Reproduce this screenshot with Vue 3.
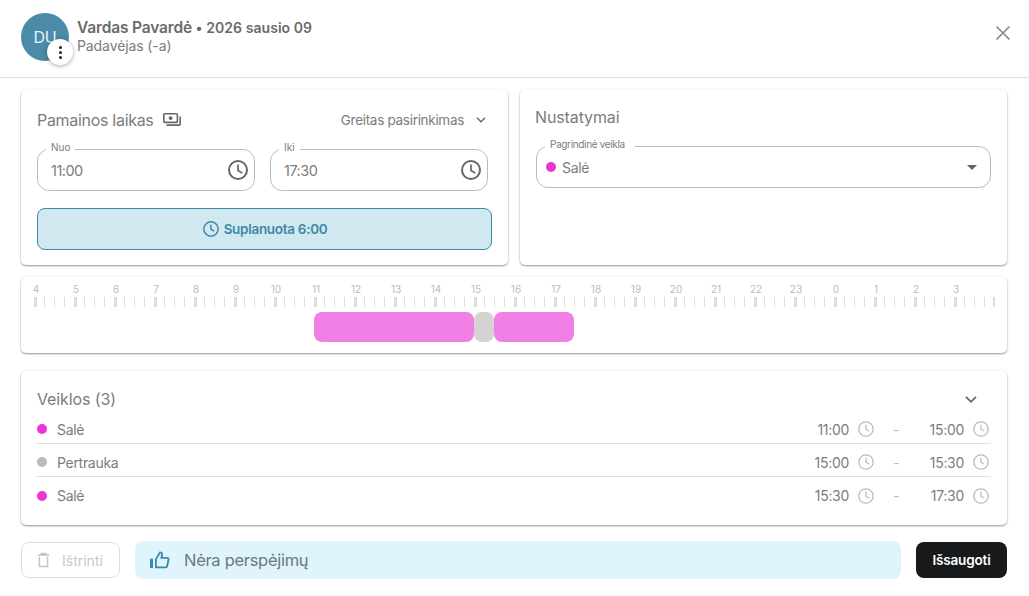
<script setup>
const hours = [4,5,6,7,8,9,10,11,12,13,14,15,16,17,18,19,20,21,22,23,0,1,2,3]
const ticks = Array.from({ length: 97 }, (_, i) => i)
const rows = [
  { name: 'Salė', color: '#ee33d9', from: '11:00', to: '15:00' },
  { name: 'Pertrauka', color: '#bbbbbb', from: '15:00', to: '15:30' },
  { name: 'Salė', color: '#ee33d9', from: '15:30', to: '17:30' },
]
</script>

<template>
  <div class="page">
    <header class="head">
      <div class="avatar">
        DU
        <button class="kebab"><i></i><i></i><i></i></button>
      </div>
      <div class="who">
        <div class="line1"><b>Vardas Pavardė</b> <span>• 2026 sausio 09</span></div>
        <div class="line2">Padavėjas (-a)</div>
      </div>
      <svg class="close" width="16" height="16" viewBox="0 0 16 16"><path d="M1.5 1.5 14.5 14.5M14.5 1.5 1.5 14.5" stroke="#8a8a8a" stroke-width="1.7" fill="none"/></svg>
    </header>

    <main class="body">
      <div class="top">
        <section class="card left">
          <div class="title-row">
            <h2>Pamainos laikas</h2>
            <svg class="money" width="20" height="18" viewBox="0 0 20 18" fill="none" stroke="#666" stroke-width="1.6">
              <rect x="1.8" y="2.8" width="13.6" height="8.6" rx="1" />
              <circle cx="8.6" cy="7.1" r="1.9" fill="#666" stroke="none" />
              <path d="M18.2 5.5v7.6a1 1 0 0 1-1 1H4.5" />
            </svg>
            <span class="quick">Greitas pasirinkimas</span>
            <svg class="quick-chev" width="12" height="8" viewBox="0 0 12 8" fill="none" stroke="#666" stroke-width="1.5"><path d="M2 1.8 6 5.8 10 1.8" /></svg>
          </div>
          <div class="times">
            <div class="field">
              <label>Nuo</label>
              <span class="value">11:00</span>
              <svg class="clock" width="22" height="22" viewBox="0 0 22 22" fill="none" stroke="#666" stroke-width="2"><circle cx="11" cy="11" r="9"/><path d="M11 5.5V11.5L15.2 14" stroke-width="1.7"/></svg>
            </div>
            <div class="field">
              <label>Iki</label>
              <span class="value">17:30</span>
              <svg class="clock" width="22" height="22" viewBox="0 0 22 22" fill="none" stroke="#666" stroke-width="2"><circle cx="11" cy="11" r="9"/><path d="M11 5.5V11.5L15.2 14" stroke-width="1.7"/></svg>
            </div>
          </div>
          <div class="planned">
            <svg width="18" height="18" viewBox="0 0 18 18" fill="none" stroke="#3f88a6" stroke-width="1.5"><circle cx="9" cy="9" r="7.2"/><path d="M9 4.8V9.4L12.2 11.2"/></svg>
            <span>Suplanuota 6:00</span>
          </div>
        </section>

        <section class="card right">
          <h2>Nustatymai</h2>
          <div class="field select">
            <label>Pagrindinė veikla</label>
            <i class="dot pink"></i>
            <span class="sale">Salė</span>
            <span class="caret"></span>
          </div>
        </section>
      </div>

      <section class="card timeline">
        <div class="labels"><span v-for="h in hours" :key="h">{{ h }}</span></div>
        <div class="ticks">
          <span v-for="t in ticks" :key="t" class="cell">
            <i :class="{ major: t % 4 === 0 && t < 96, last: t === 96 }"></i>
          </span>
        </div>
        <div class="bars">
          <span class="bar work w160"></span>
          <span class="bar brk"></span>
          <span class="bar work w80"></span>
        </div>
      </section>

      <section class="card acts">
        <div class="acts-head">
          <h2>Veiklos (3)</h2>
          <svg width="14" height="9" viewBox="0 0 14 9" fill="none" stroke="#666" stroke-width="1.7"><path d="M2 1.8 7 6.8 12 1.8"/></svg>
        </div>
        <div v-for="(r, i) in rows" :key="i" class="row">
          <i class="dot" :style="{ background: r.color }"></i>
          <span class="name">{{ r.name }}</span>
          <span class="t t1">{{ r.from }}</span>
          <svg class="c" width="16" height="16" viewBox="0 0 16 16" fill="none" stroke="#bbb" stroke-width="1.3"><circle cx="8" cy="8" r="7.2"/><path d="M8 3.8V8.2L11 10"/></svg>
          <span class="dash">-</span>
          <span class="t t2">{{ r.to }}</span>
          <svg class="c" width="16" height="16" viewBox="0 0 16 16" fill="none" stroke="#bbb" stroke-width="1.3"><circle cx="8" cy="8" r="7.2"/><path d="M8 3.8V8.2L11 10"/></svg>
        </div>
      </section>

      <footer class="foot">
        <button class="del">
          <svg width="13" height="16" viewBox="0 0 14 16" fill="none" stroke="#c4c4c4" stroke-width="1.6"><path d="M1 2.6h12M4.5 2.4V1h5v1.4M2.6 4.6V15h8.8V4.6"/></svg>
          <span>Ištrinti</span>
        </button>
        <div class="notice">
          <svg width="20" height="18" viewBox="0 0 22 20" fill="none" stroke="#3f88a6" stroke-width="2"><path d="M1.5 8.5V19" stroke-width="3.4"/><path d="M6.5 9 11 1.6c1.4 0 2.3 1 2.3 2.4L12.6 7.6H19c1 0 1.7.9 1.5 1.9l-1.6 7.4c-.2.8-.8 1.2-1.6 1.2H6.5Z"/></svg>
          <span>Nėra perspėjimų</span>
        </div>
        <button class="save">Išsaugoti</button>
      </footer>
    </main>
  </div>
</template>

<style scoped>
.page { width: 1029px; height: 596px; overflow: hidden; background: #fff; font-family: "Inter", "Noto Sans", sans-serif; color: #7c7c7c; letter-spacing: -0.3px; }
i { display: block; }
h2 { margin: 0; font-size: 16px; font-weight: 400; color: #7c7c7c; line-height: 20px; }
.head { border-bottom: 1px solid #e0e0e0; display: flex; align-items: flex-start; padding: 0 18px 0 21px; box-sizing: border-box; height: 78px; }
.avatar { position: relative; width: 48px; height: 48px; margin-top: 13px; border-radius: 50%; background: #4a8ba8; color: #eaf3f6; font-size: 16px; display: flex; align-items: center; justify-content: center; flex: none; }
.kebab { position: absolute; left: 26px; top: 26px; width: 26px; height: 26px; border: 0; padding: 0; border-radius: 50%; background: #fff; box-shadow: 0 1px 4px rgba(0,0,0,.35); display: flex; flex-direction: column; align-items: center; justify-content: center; gap: 2px; }
.kebab i { width: 3px; height: 3px; border-radius: 50%; background: #222; }
.who { margin-left: 8px; margin-top: 19px; flex: 1; }
.line1 { line-height: 18px; color: #6a6a6a; font-size: 14px; font-weight: 600; white-space: nowrap; letter-spacing: 0.05px; }
.line1 b { font-size: 15.5px; font-weight: 600; letter-spacing: -0.15px; }
.line2 { font-size: 14px; line-height: 18px; color: #7c7c7c; letter-spacing: -0.1px; }
.close { margin-top: 25px; flex: none; }
.body { padding: 12px 22px 0 21px; }
.card { background: #fff; border-radius: 5px; box-shadow: 0 1px 2px rgba(0,0,0,.4), 0 0 3px rgba(0,0,0,.06); }
.top { display: grid; grid-template-columns: 487px 487px; gap: 12px; }
.left { height: 175px; padding: 20px 16px 0; box-sizing: border-box; }
.title-row { display: flex; align-items: center; height: 20px; }
.money { margin-left: 8px; }
.quick { margin-left: auto; font-size: 13.5px; color: #7c7c7c; }
.quick-chev { margin-left: 11px; margin-right: 5px; }
.times { display: flex; gap: 15px; margin-top: 19px; }
.field { position: relative; width: 218px; height: 42px; box-sizing: border-box; border: 1px solid #bbb; border-radius: 12px; display: flex; align-items: center; padding: 0 16px 0 13px; }
.field label { position: absolute; left: 8px; top: -9px; padding: 0 5px; background: #fff; font-size: 10px; line-height: 12px; color: #7c7c7c; letter-spacing: 0; }
.value { flex: 1; font-size: 14.5px; color: #7c7c7c; letter-spacing: -0.5px; }
.clock { flex: none; margin-right: -11px; }
.planned { margin-top: 17px; height: 42px; box-sizing: border-box; border: 1px solid #3f88a6; border-radius: 8px; background: #d0e8f0; display: flex; align-items: center; justify-content: center; gap: 4px; color: #3f88a6; font-size: 13.5px; font-weight: 600; }
.right { height: 175px; padding: 17px 16px 0 15px; box-sizing: border-box; }
.right h2, .acts h2 { letter-spacing: -0.12px; }
.select { width: 455px; margin-top: 19px; margin-left: 1px; padding: 0 9px; }
.select label { left: 8px; padding-right: 10px; letter-spacing: -0.35px; }
.dot { width: 10px; height: 10px; border-radius: 50%; flex: none; }
.pink { background: #ee33d9; }
.sale { margin-left: 6px; font-size: 14px; color: #7c7c7c; }
.caret { margin-left: auto; margin-right: 4px; border-left: 5.5px solid transparent; border-right: 5.5px solid transparent; border-top: 5px solid #666; }
.timeline { margin-top: 12px; height: 76px; box-sizing: border-box; padding: 5px 0 0 13px; overflow: hidden; }
.labels { display: flex; margin-left: -18px; height: 15px; }
.labels span { width: 40px; flex: none; text-align: center; font-size: 10px; line-height: 14px; color: #bbb; letter-spacing: 0; }
.ticks { display: flex; height: 10px; }
.cell { width: 10px; flex: none; }
.cell i { width: 1px; height: 10px; background: #ddd; }
.cell i.major { width: 3px; }
.cell i.last { width: 2px; margin-left: -1px; }
.bars { display: flex; margin: 5px 0 0 280px; }
.bar { height: 30px; border-radius: 8px; display: block; }
.work { background: #ef7fe4; }
.w160 { width: 160px; }
.w80 { width: 80px; }
.brk { width: 20px; background: #d3d3d3; }
.acts { margin-top: 18px; height: 154px; box-sizing: border-box; padding: 18px 16px 0; }
.acts-head { display: flex; align-items: center; justify-content: space-between; height: 20px; padding-right: 13px; margin-bottom: 2px; }
.row { height: 33px; box-sizing: border-box; padding-top: 4px; display: flex; align-items: center; border-bottom: 1px solid #e0e0e0; font-size: 14px; }
.row:last-child { border-bottom: 0; }
.name { margin-left: 10px; flex: 1; color: #7c7c7c; }
.t { text-align: right; color: #7c7c7c; }
.t1 { width: 60px; }
.t2 { width: 59px; }
.c { margin-left: 9px; margin-right: 2px; flex: none; }
.dash { width: 18px; margin-left: 11px; text-align: center; color: #bbb; }
.foot { display: flex; align-items: center; margin-top: 16px; height: 38px; }
.del { width: 99px; height: 36px; box-sizing: border-box; border: 1px solid #ddd; border-radius: 8px; background: #fff; display: flex; align-items: center; padding: 0 0 0 15px; gap: 12px; color: #c8c8c8; font: inherit; font-size: 14px; letter-spacing: 0; }
.notice { margin-left: 15px; width: 766px; height: 38px; border-radius: 8px; background: #dff4fd; display: flex; align-items: center; padding-left: 15px; gap: 14px; box-sizing: border-box; font-size: 16.5px; color: #6b7a80; }
.save { margin-left: 15px; width: 91px; height: 36px; border: 0; border-radius: 8px; background: #18191b; color: #fff; font: inherit; font-size: 13.5px; font-weight: 600; letter-spacing: -0.15px; }
</style>
